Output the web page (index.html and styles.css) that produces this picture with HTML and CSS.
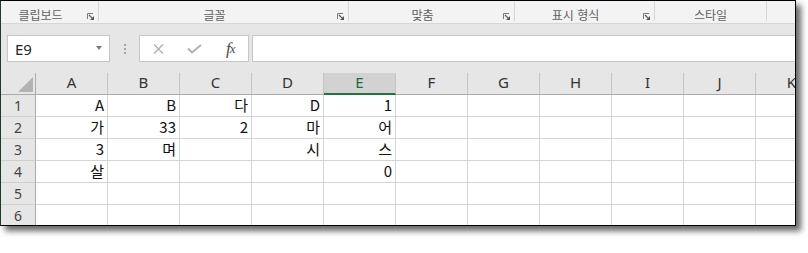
FILE: index.html
```html
<!DOCTYPE html>
<html lang="ko">
<head>
<meta charset="utf-8">
<title>Excel</title>
<link rel="stylesheet" href="styles.css">
</head>
<body>
<div class="win">
  <div class="ribbon">
    <div class="grp g1"><span class="lbl">클립보드</span><svg class="launch" width="7" height="7" viewBox="0 0 7 7"><path d="M0.5 6V0.5H6" stroke="#7a7a7a" fill="none"/><path d="M2 2L5.2 5.2" stroke="#555" stroke-width="1.1"/><path d="M3 7H7V3Z" fill="#555"/></svg></div>
    <div class="grp g2"><span class="lbl">글꼴</span><svg class="launch" width="7" height="7" viewBox="0 0 7 7"><path d="M0.5 6V0.5H6" stroke="#7a7a7a" fill="none"/><path d="M2 2L5.2 5.2" stroke="#555" stroke-width="1.1"/><path d="M3 7H7V3Z" fill="#555"/></svg></div>
    <div class="grp g3"><span class="lbl">맞춤</span><svg class="launch" width="7" height="7" viewBox="0 0 7 7"><path d="M0.5 6V0.5H6" stroke="#7a7a7a" fill="none"/><path d="M2 2L5.2 5.2" stroke="#555" stroke-width="1.1"/><path d="M3 7H7V3Z" fill="#555"/></svg></div>
    <div class="grp g4"><span class="lbl">표시 형식</span><svg class="launch" width="7" height="7" viewBox="0 0 7 7"><path d="M0.5 6V0.5H6" stroke="#7a7a7a" fill="none"/><path d="M2 2L5.2 5.2" stroke="#555" stroke-width="1.1"/><path d="M3 7H7V3Z" fill="#555"/></svg></div>
    <div class="grp g5"><span class="lbl">스타일</span></div>
    <div class="grp g6"></div>
  </div>
  <div class="fbar">
    <div class="namebox"><span class="ref">E9</span><i class="dd"></i></div>
    <div class="dots"><b></b><b></b><b></b></div>
    <div class="fxbox">
      <span class="fbtn"><svg width="11" height="10" viewBox="0 0 11 10"><path d="M1 0.5L10 9.5M10 0.5L1 9.5" stroke="#b0b0b0" stroke-width="1.3" fill="none"/></svg></span>
      <span class="fbtn"><svg width="15" height="10" viewBox="0 0 15 10"><path d="M1 4.5L5 8.5L14 1" stroke="#b0b0b0" stroke-width="2" fill="none"/></svg></span>
      <span class="fbtn fx"><i>f</i><i class="x">x</i></span>
    </div>
    <div class="finput"></div>
  </div>
  <div class="grid">
    <div class="corner"><span class="tri"></span></div>
    <div class="ch">A</div><div class="ch">B</div><div class="ch">C</div><div class="ch">D</div><div class="ch sel">E</div><div class="ch">F</div><div class="ch">G</div><div class="ch">H</div><div class="ch">I</div><div class="ch">J</div><div class="ch">K</div>

    <div class="rh">1</div>
    <div class="c">A</div><div class="c">B</div><div class="c">다</div><div class="c">D</div><div class="c">1</div><div class="c"></div><div class="c"></div><div class="c"></div><div class="c"></div><div class="c"></div><div class="c"></div>

    <div class="rh">2</div>
    <div class="c">가</div><div class="c">33</div><div class="c">2</div><div class="c">마</div><div class="c">어</div><div class="c"></div><div class="c"></div><div class="c"></div><div class="c"></div><div class="c"></div><div class="c"></div>

    <div class="rh">3</div>
    <div class="c">3</div><div class="c">며</div><div class="c"></div><div class="c">시</div><div class="c">스</div><div class="c"></div><div class="c"></div><div class="c"></div><div class="c"></div><div class="c"></div><div class="c"></div>

    <div class="rh">4</div>
    <div class="c">살</div><div class="c"></div><div class="c"></div><div class="c"></div><div class="c">0</div><div class="c"></div><div class="c"></div><div class="c"></div><div class="c"></div><div class="c"></div><div class="c"></div>

    <div class="rh">5</div>
    <div class="c"></div><div class="c"></div><div class="c"></div><div class="c"></div><div class="c"></div><div class="c"></div><div class="c"></div><div class="c"></div><div class="c"></div><div class="c"></div><div class="c"></div>

    <div class="rh">6</div>
    <div class="c"></div><div class="c"></div><div class="c"></div><div class="c"></div><div class="c"></div><div class="c"></div><div class="c"></div><div class="c"></div><div class="c"></div><div class="c"></div><div class="c"></div>
  </div>
</div>
</body>
</html>
```
FILE: styles.css
```css
html, body {
  margin: 0;
  padding: 0;
  background: #ffffff;
}
body {
  width: 808px;
  height: 253px;
  overflow: hidden;
  font-family: "Noto Sans", "Noto Sans CJK KR", sans-serif;
}
.win {
  width: 796px;
  height: 226px;
  box-sizing: border-box;
  border: 1px solid #000;
  border-left-color: #1f3a2a;
  background: #e6e6e6;
  box-shadow: 5px 5px 6px rgba(0, 0, 0, 0.6);
  overflow: hidden;
  display: flex;
  flex-direction: column;
}

/* ribbon group labels */
.ribbon {
  flex: 0 0 auto;
  height: 23px;
  box-sizing: border-box;
  background: #f3f3f3;
  border-bottom: 1px solid #d6d6d6;
  display: flex;
  align-items: flex-start;
}
.grp {
  height: 19px;
  margin-top: 1px;
  box-sizing: border-box;
  border-right: 1px solid #d6d6d6;
  display: flex;
  align-items: flex-start;
}
.g1 { width: 98px; margin-top: 0; height: 20px; }
.g2 { width: 250px; margin-top: 0; height: 20px; }
.g3 { width: 166px; margin-top: 0; height: 20px; }
.g4 { width: 140px; margin-top: 0; height: 20px; }
.g5 { width: 112px; margin-top: 0; height: 20px; }
.g6 { flex: 1; border-right: none; }
.lbl {
  flex: 1;
  text-align: center;
  font-family: "Noto Sans CJK KR", sans-serif;
  font-size: 12px;
  line-height: 16px;
  padding-top: 6px;
  color: #616161;
  white-space: nowrap;
}
.launch {
  flex: 0 0 7px;
  margin: 12px 4px 0 7px;
  display: block;
}

/* formula bar */
.fbar {
  flex: 0 0 49px;
  display: flex;
  align-items: center;
  padding-left: 6px;
  background: #e6e6e6;
}
.namebox {
  width: 103px;
  height: 27px;
  box-sizing: border-box;
  background: #fff;
  border: 1px solid #c6c6c6;
  display: flex;
  align-items: center;
  padding: 0 7px 0 7px;
}
.ref {
  flex: 1;
  font-family: "Noto Sans", sans-serif;
  font-size: 15px;
  line-height: 20px;
  color: #262626;
}
.dd {
  width: 0;
  height: 0;
  border-left: 3.5px solid transparent;
  border-right: 3.5px solid transparent;
  border-top: 4px solid #7a7a7a;
  margin-top: -1px;
}
.dots {
  width: 2px;
  margin-left: 14px;
  display: flex;
  flex-direction: column;
  gap: 2px;
}
.dots b {
  display: block;
  width: 2px;
  height: 2px;
  background: #a5a5a5;
}
.fxbox {
  width: 110px;
  height: 27px;
  box-sizing: border-box;
  margin-left: 13px;
  background: #fff;
  border: 1px solid #c6c6c6;
  display: flex;
  align-items: center;
  padding-left: 1px;
}
.fbtn {
  width: 36px;
  display: flex;
  align-items: center;
  justify-content: center;
}
.fbtn svg { display: block; }
.fx {
  font-family: "Liberation Serif", serif;
  font-size: 17px;
  line-height: 20px;
  color: #4a4a4a;
  letter-spacing: -1px;
}
.fx .x {
  font-size: 13px;
}
.finput {
  flex: 1;
  height: 27px;
  box-sizing: border-box;
  margin-left: 3px;
  margin-right: -2px;
  background: #fff;
  border: 1px solid #c6c6c6;
}

/* grid */
.grid {
  flex: 0 0 auto;
  display: grid;
  grid-template-columns: 35px repeat(11, 72px);
  grid-template-rows: 22px repeat(6, 22px);
  background: #fff;
}
.corner {
  box-sizing: border-box;
  background: #e6e6e6;
  border-right: 1px solid #ababab;
  border-bottom: 1px solid #ababab;
  display: flex;
  justify-content: flex-end;
  align-items: flex-end;
  padding: 0 2px 2px 0;
}
.tri {
  width: 15px;
  height: 15px;
  background: #b3b3b3;
  clip-path: polygon(100% 0, 100% 100%, 0 100%);
}
.ch {
  box-sizing: border-box;
  background: #e6e6e6;
  border-right: 1px solid #c4c4c4;
  border-bottom: 1px solid #ababab;
  text-align: center;
  font-family: "Noto Sans", sans-serif;
  font-size: 15px;
  line-height: 16px;
  padding-top: 1px;
  color: #333;
}
.ch.sel {
  background: #d2d2d2;
  border-bottom: 2px solid #217346;
  color: #1d6b43;
}
.rh {
  box-sizing: border-box;
  background: #e6e6e6;
  border-right: 1px solid #ababab;
  border-bottom: 1px solid #cfcfcf;
  text-align: center;
  font-family: "Noto Sans", sans-serif;
  font-size: 14px;
  line-height: 21px;
  color: #444;
}
.c {
  box-sizing: border-box;
  border-right: 1px solid #d4d4d4;
  border-bottom: 1px solid #d4d4d4;
  text-align: right;
  padding-right: 3px;
  font-family: "Noto Sans CJK KR", sans-serif;
  font-size: 15px;
  line-height: 19px;
  color: #111;
  white-space: nowrap;
  overflow: hidden;
}
```
